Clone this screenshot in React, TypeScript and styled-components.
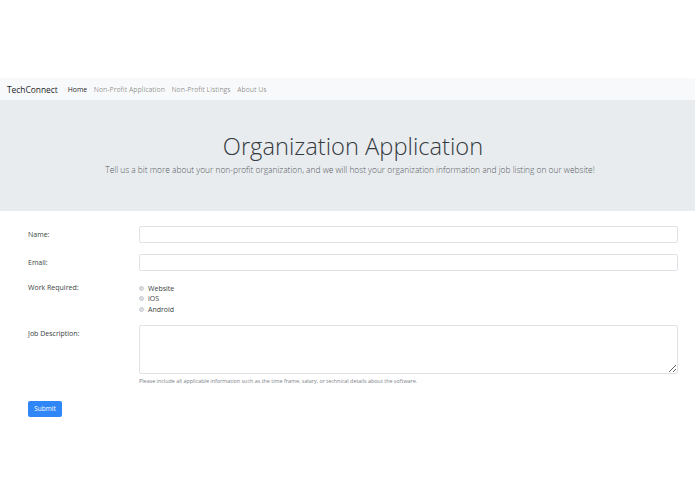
import React from "react";
import styled, { createGlobalStyle } from "styled-components";

const GlobalStyle = createGlobalStyle`
  html, body {
    margin: 0;
    padding: 0;
    background: #ffffff;
  }
  body {
    font-family: "Open Sans", "Noto Sans", sans-serif;
    color: #212529;
  }
  * {
    box-sizing: border-box;
  }
`;

const Page = styled.div`
  width: 695px;
  min-height: 494px;
  padding-top: 78px;
  background: #ffffff;
`;

const Navbar = styled.nav`
  display: flex;
  align-items: center;
  height: 22px;
  padding: 0 7px;
  background: #f8f9fa;
`;

const Brand = styled.span`
  font-size: 8.4px;
  color: #212529;
  margin-right: 10px;
`;

const NavLinks = styled.div`
  display: flex;
  gap: 6.5px;
`;

const NavLink = styled.a<{ $active?: boolean }>`
  font-size: 6.9px;
  color: ${({ $active }) => ($active ? "rgba(0,0,0,0.9)" : "rgba(0,0,0,0.45)")};
  text-decoration: none;
  cursor: pointer;
`;

const Jumbotron = styled.header`
  height: 111px;
  background: #e9ecef;
  display: flex;
  flex-direction: column;
  align-items: center;
  padding-top: 31px;
  padding-left: 5px;
`;

const Title = styled.h1`
  margin: 0 0 0 6px;
  font-size: 23.7px;
  font-weight: 300;
  line-height: 30px;
  color: #343a40;
`;

const Lead = styled.p`
  margin: 3px 0 0;
  font-size: 8.4px;
  font-weight: 300;
  color: #555b61;
`;

const Form = styled.form`
  padding: 15px 17px 0 28px;
  display: flex;
  flex-direction: column;
`;

const FormRow = styled.div<{ $gap?: number }>`
  display: grid;
  grid-template-columns: 111px 1fr;
  margin-bottom: ${({ $gap }) => $gap ?? 11}px;
`;

const Label = styled.label<{ $top?: number }>`
  font-size: 7px;
  color: #3a3f44;
  padding-top: ${({ $top }) => $top ?? 4}px;
`;

const Input = styled.input`
  width: 100%;
  height: 17px;
  border: 1px solid #dfe3e7;
  border-radius: 2px;
  background: #ffffff;
  outline: none;
`;

const TextArea = styled.textarea`
  display: block;
  width: 100%;
  height: 49px;
  border: 1px solid #dfe3e7;
  border-radius: 2px;
  background: #ffffff;
  outline: none;
  resize: vertical;
`;

const RadioGroup = styled.div`
  display: flex;
  flex-direction: column;
`;

const RadioOption = styled.label`
  display: flex;
  align-items: center;
  gap: 4px;
  height: 10.5px;
  font-size: 7px;
  color: #3a3f44;
`;

const RadioDot = styled.span`
  width: 5px;
  height: 5px;
  border-radius: 50%;
  background: #d9dcdf;
  border: 1px solid #c8ccd0;
`;

const HelpText = styled.small`
  display: block;
  margin-top: 3px;
  font-size: 5.4px;
  color: #7b8289;
`;

const SubmitButton = styled.button`
  align-self: flex-start;
  width: 34px;
  height: 16px;
  padding: 0;
  border: none;
  border-radius: 2px;
  background: #2f86f6;
  color: #ffffff;
  font-family: "Open Sans", "Noto Sans", sans-serif;
  font-size: 6.5px;
  cursor: pointer;
`;

const workOptions = ["Website", "iOS", "Android"];

export default function App() {
  return (
    <Page>
      <GlobalStyle />
      <Navbar>
        <Brand>TechConnect</Brand>
        <NavLinks>
          <NavLink $active>Home</NavLink>
          <NavLink>Non-Profit Application</NavLink>
          <NavLink>Non-Profit Listings</NavLink>
          <NavLink>About Us</NavLink>
        </NavLinks>
      </Navbar>
      <Jumbotron>
        <Title>Organization Application</Title>
        <Lead>
          Tell us a bit more about your non-profit organization, and we will host your
          organization information and job listing on our website!
        </Lead>
      </Jumbotron>
      <Form onSubmit={(e) => e.preventDefault()}>
        <FormRow>
          <Label>Name:</Label>
          <Input type="text" />
        </FormRow>
        <FormRow $gap={12}>
          <Label>Email:</Label>
          <Input type="email" />
        </FormRow>
        <FormRow $gap={10}>
          <Label $top={0}>Work Required:</Label>
          <RadioGroup>
            {workOptions.map((opt) => (
              <RadioOption key={opt}>
                <RadioDot />
                {opt}
              </RadioOption>
            ))}
          </RadioGroup>
        </FormRow>
        <FormRow $gap={16}>
          <Label $top={4}>Job Description:</Label>
          <div>
            <TextArea />
            <HelpText>
              Please include all applicable information such as the time frame, salary, or
              technical details about the software.
            </HelpText>
          </div>
        </FormRow>
        <SubmitButton type="submit">Submit</SubmitButton>
      </Form>
    </Page>
  );
}
